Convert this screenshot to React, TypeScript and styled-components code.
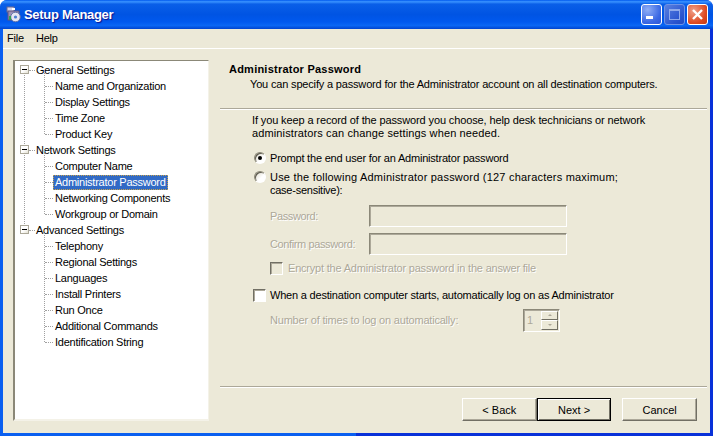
import { createGlobalStyle, styled } from 'styled-components';

const GlobalStyle = createGlobalStyle`
  html, body { margin: 0; padding: 0; background: #fff; }
  * { box-sizing: border-box; }
  body { font-family: "Liberation Sans", Arial, sans-serif; font-size: 11px; color: #000; }
`;

const Window = styled.div`
  width: 713px;
  height: 436px;
  display: flex;
  flex-direction: column;
  overflow: hidden;
  background: linear-gradient(90deg, #0a5ff0 0, #0a5ff0 50%, #0831d9 50%);
  border-radius: 7px 7px 0 0;
`;

const TitleBar = styled.div`
  height: 29px;
  flex: none;
  display: flex;
  align-items: center;
  padding: 0 5px 0 6px;
  background: linear-gradient(180deg, #0058ee 0%, #3a93ff 6%, #0a5fe8 14%, #0054e3 50%, #0058ee 75%, #0a66f4 88%, #0043cf 100%);
`;

const TitleText = styled.div`
  margin-left: 2px;
  flex: 1;
  font-size: 13px;
  font-weight: 700;
  letter-spacing: -0.3px;
  color: #fff;
  text-shadow: 1px 1px 1px #0f1089;
`;

const CaptionButton = styled.div<{ $kind: 'min' | 'max' | 'close' }>`
  width: 21px;
  height: 21px;
  margin-left: 2px;
  display: grid;
  place-items: center;
  border: 1px solid ${({ $kind }) => ($kind === 'max' ? '#6f93e6' : '#fff')};
  border-radius: 3px;
  background: ${({ $kind }) =>
    $kind === 'close'
      ? 'radial-gradient(circle at 30% 30%, #f0a08a, #dd4a22 65%, #c23a12)'
      : $kind === 'max'
        ? 'linear-gradient(135deg, #5a80e0, #2a55cf 70%, #2049c2)'
        : 'radial-gradient(circle at 30% 25%, #90aef5, #3a68e4 65%, #2a55d8)'};
`;

const ClientArea = styled.div`
  flex: 1;
  min-height: 0;
  margin: 0 3px 3px;
  display: flex;
  flex-direction: column;
  background: #ece9d8;
`;

const MenuBar = styled.div`
  height: 20px;
  flex: none;
  display: flex;
  align-items: center;
  gap: 12px;
  padding: 0 4px 1px;
  border-bottom: 1px solid #fff;
`;

const MenuItem = styled.span`
  font-size: 11px;
  letter-spacing: -0.2px;
`;

const Body = styled.div`
  flex: 1;
  min-height: 0;
  display: flex;
  gap: 11px;
  padding: 11px 3px 12px 10px;
`;

const TreePanel = styled.div`
  width: 196px;
  flex: none;
  padding-top: 1px;
  background: #fff;
  border: 2px solid;
  border-color: #8b8878 #f4f2e8 #f4f2e8 #8b8878;
  border-top-width: 1px;
  border-right-width: 1px;
`;

const Group = styled.div<{ $last?: boolean }>`
  position: relative;

  &::before {
    content: ${({ $last }) => ($last ? 'none' : "''")};
    position: absolute;
    left: 9px;
    top: 8px;
    bottom: -8px;
    border-left: 1px dotted #a0a0a0;
  }
`;

const RootRow = styled.div`
  position: relative;
  height: 16px;
  line-height: 16px;
  padding-left: 21px;
  white-space: nowrap;
  letter-spacing: -0.22px;

  &::before {
    content: '';
    position: absolute;
    left: 14px;
    top: 8px;
    width: 6px;
    border-top: 1px dotted #a0a0a0;
  }
`;

const Expander = styled.span`
  position: absolute;
  z-index: 1;
  left: 5px;
  top: 3px;
  width: 9px;
  height: 9px;
  background: linear-gradient(135deg, #fff 50%, #e4e1d2);
  border: 1px solid #aca899;

  &::after {
    content: '';
    position: absolute;
    left: 1px;
    top: 3px;
    width: 5px;
    height: 1px;
    background: #000;
  }
`;

const Children = styled.div`
  position: relative;

  &::before {
    content: '';
    position: absolute;
    left: 29px;
    top: -8px;
    bottom: 8px;
    border-left: 1px dotted #a0a0a0;
  }
`;

const ChildRow = styled.div`
  position: relative;
  height: 16px;
  line-height: 15px;
  padding-left: 38px;
  white-space: nowrap;

  &::before {
    content: '';
    position: absolute;
    left: 30px;
    top: 8px;
    width: 8px;
    border-top: 1px dotted #a0a0a0;
  }
`;

const ChildLabel = styled.span<{ $selected?: boolean }>`
  display: inline-block;
  height: 15px;
  padding: 0 2px;
  margin-top: 1px;
  letter-spacing: -0.25px;
  color: ${({ $selected }) => ($selected ? '#fff' : '#000')};
  background: ${({ $selected }) => ($selected ? '#316ac5' : 'transparent')};
  outline: ${({ $selected }) => ($selected ? '1px dotted #c9a24a' : 'none')};
  outline-offset: -1px;
`;

const Main = styled.div`
  flex: 1;
  display: flex;
  flex-direction: column;
  min-width: 0;
`;

const Header = styled.div`
  height: 48px;
  flex: none;
  padding: 1px 0 0 9px;
`;

const HeaderTitle = styled.div`
  height: 15px;
  line-height: 16px;
  font-weight: 700;
  letter-spacing: 0.23px;
`;

const HeaderSub = styled.div`
  height: 16px;
  line-height: 16px;
  margin-left: 21px;
  letter-spacing: -0.17px;
  white-space: nowrap;
`;

const Divider = styled.div`
  height: 2px;
  flex: none;
  border-top: 1px solid #aca899;
  border-bottom: 1px solid #fff;
`;

const Content = styled.div`
  flex: 1;
  padding: 4px 0 0 32px;
  display: flex;
  flex-direction: column;
`;

const Paragraph = styled.div`
  line-height: 13px;
  margin-bottom: 12px;
`;

const TextLine = styled.div<{ $spacing: number }>`
  letter-spacing: ${({ $spacing }) => $spacing}px;
  white-space: nowrap;
`;

const OptionRow = styled.div<{ $top: number; $indent?: number; $gap?: number }>`
  display: flex;
  align-items: flex-start;
  gap: ${({ $gap }) => $gap ?? 4}px;
  margin-top: ${({ $top }) => $top}px;
  margin-left: ${({ $indent }) => $indent ?? 2}px;
`;

const OptionText = styled.div<{ $disabled?: boolean }>`
  line-height: 13px;
  letter-spacing: -0.2px;
  white-space: nowrap;
  color: ${({ $disabled }) => ($disabled ? '#aca899' : '#000')};
  text-shadow: ${({ $disabled }) => ($disabled ? '1px 1px 0 #fff' : 'none')};
`;

const Radio = styled.span<{ $checked?: boolean }>`
  width: 12px;
  height: 12px;
  flex: none;
  display: grid;
  place-items: center;
  border-radius: 50%;
  background: linear-gradient(135deg, #dcd8c8, #fff 60%);
  border: 1px solid;
  border-color: #8b8878 #fff #fff #8b8878;
  box-shadow: inset 1px 1px 0 #5c5a4e;

  &::after {
    content: '';
    display: ${({ $checked }) => ($checked ? 'block' : 'none')};
    width: 4px;
    height: 4px;
    border-radius: 50%;
    background: #000;
  }
`;

const Checkbox = styled.span<{ $disabled?: boolean }>`
  width: 13px;
  height: 13px;
  flex: none;
  background: ${({ $disabled }) => ($disabled ? '#ece9d8' : '#fff')};
  border: 1px solid;
  border-color: #716f64 #fff #fff #716f64;
  box-shadow: inset 1px 1px 0 #aca899;
`;

const FieldRow = styled.div<{ $top: number }>`
  display: flex;
  align-items: center;
  height: 22px;
  margin-top: ${({ $top }) => $top}px;
  margin-left: 18px;
`;

const FieldLabel = styled(OptionText)<{ $width?: number; $spacing?: number }>`
  width: ${({ $width }) => $width ?? 99}px;
  flex: none;
  letter-spacing: ${({ $spacing }) => $spacing ?? -0.38}px;
`;

const DisabledInput = styled.div`
  width: 198px;
  height: 22px;
  background: #ece9d8;
  border: 1px solid;
  border-color: #8b8878 #fff #fff #8b8878;
  box-shadow: inset 1px 1px 0 #aca899;
`;

const SpinBox = styled.div`
  width: 37px;
  height: 23px;
  margin-left: 2px;
  display: flex;
  justify-content: space-between;
  padding: 1px 1px 1px 3px;
  background: #ece9d8;
  border: 1px solid;
  border-color: #8b8878 #fff #fff #8b8878;
  box-shadow: inset 1px 1px 0 #aca899;
  font-size: 11px;
  line-height: 19px;
  color: #aca899;
`;

const SpinButtons = styled.div`
  width: 17px;
  display: flex;
  flex-direction: column;
`;

const SpinArrow = styled.span<{ $down?: boolean }>`
  flex: 1;
  display: grid;
  place-items: center;
  background: #ece9d8;
  border: 1px solid;
  border-color: #fff #716f64 #716f64 #fff;

  &::after {
    content: '';
    width: 0;
    height: 0;
    border-left: 2px solid transparent;
    border-right: 2px solid transparent;
    ${({ $down }) => ($down ? 'border-top: 2px solid #aca899;' : 'border-bottom: 2px solid #aca899;')}
  }
`;

const Footer = styled.div`
  height: 33px;
  flex: none;
  display: flex;
  align-items: flex-end;
  padding: 0 10px 0 242px;
`;

const PushButton = styled.div<{ $default?: boolean; $gap?: number }>`
  width: 75px;
  height: 23px;
  margin-left: ${({ $gap }) => $gap ?? 0}px;
  display: grid;
  place-items: center;
  font-size: 11px;
  background: #ece9d8;
  border: 1px solid;
  border-color: ${({ $default }) => ($default ? '#000' : '#fff #716f64 #716f64 #fff')};
  box-shadow: ${({ $default }) =>
    $default ? 'inset 1px 1px 0 #fff, inset -1px -1px 0 #716f64' : 'inset -1px -1px 0 #aca899'};
`;

function AppIcon() {
  return (
    <svg width="16" height="17" viewBox="0 0 16 17">
      <rect x="1" y="1" width="7" height="5" fill="#d8d4e8" stroke="#6a6a90" />
      <rect x="2" y="5" width="11" height="9" fill="#9c8fb4" stroke="#5c5480" />
      <circle cx="9.5" cy="11" r="4.8" fill="#e6e6f2" stroke="#6070a8" />
      <circle cx="9.5" cy="11" r="1.6" fill="#4c7fd0" />
      <rect x="3" y="10" width="2" height="4" fill="#38a050" />
      <rect x="6" y="2" width="3" height="2" fill="#fff" />
    </svg>
  );
}

function CloseGlyph() {
  return (
    <svg width="13" height="13" viewBox="0 0 13 13">
      <path d="M2 2 L11 11 M11 2 L2 11" stroke="#fff" strokeWidth="2.4" />
    </svg>
  );
}

function MaxGlyph() {
  return (
    <svg width="13" height="13" viewBox="0 0 13 13" fill="none">
      <rect x="1.5" y="1.5" width="10" height="10" stroke="#8fa9ea" />
      <rect x="1" y="1" width="11" height="2" fill="#8fa9ea" />
    </svg>
  );
}

function MinGlyph() {
  return (
    <svg width="13" height="13" viewBox="0 0 13 13">
      <rect x="1" y="8" width="7" height="3" fill="#fff" />
    </svg>
  );
}

const tree = [
  {
    name: 'General Settings',
    items: ['Name and Organization', 'Display Settings', 'Time Zone', 'Product Key'],
  },
  {
    name: 'Network Settings',
    items: ['Computer Name', 'Administrator Password', 'Networking Components', 'Workgroup or Domain'],
  },
  {
    name: 'Advanced Settings',
    items: [
      'Telephony',
      'Regional Settings',
      'Languages',
      'Install Printers',
      'Run Once',
      'Additional Commands',
      'Identification String',
    ],
  },
];

export default function App() {
  return (
    <Window>
      <GlobalStyle />
      <TitleBar>
        <AppIcon />
        <TitleText>Setup Manager</TitleText>
        <CaptionButton $kind="min">
          <MinGlyph />
        </CaptionButton>
        <CaptionButton $kind="max">
          <MaxGlyph />
        </CaptionButton>
        <CaptionButton $kind="close">
          <CloseGlyph />
        </CaptionButton>
      </TitleBar>
      <ClientArea>
        <MenuBar>
          <MenuItem>File</MenuItem>
          <MenuItem>Help</MenuItem>
        </MenuBar>
        <Body>
          <TreePanel>
            {tree.map((group, i) => (
              <Group key={group.name} $last={i === tree.length - 1}>
                <RootRow>
                  <Expander />
                  {group.name}
                </RootRow>
                <Children>
                  {group.items.map((item) => (
                    <ChildRow key={item}>
                      <ChildLabel $selected={item === 'Administrator Password'}>{item}</ChildLabel>
                    </ChildRow>
                  ))}
                </Children>
              </Group>
            ))}
          </TreePanel>
          <Main>
            <Header>
              <HeaderTitle>Administrator Password</HeaderTitle>
              <HeaderSub>
                You can specify a password for the Administrator account on all destination computers.
              </HeaderSub>
            </Header>
            <Divider />
            <Content>
              <Paragraph>
                <TextLine $spacing={-0.12}>
                  If you keep a record of the password you choose, help desk technicians or network
                </TextLine>
                <TextLine $spacing={0.13}>administrators can change settings when needed.</TextLine>
              </Paragraph>
              <OptionRow $top={0}>
                <Radio $checked />
                <OptionText>Prompt the end user for an Administrator password</OptionText>
              </OptionRow>
              <OptionRow $top={6}>
                <Radio />
                <OptionText>
                  <TextLine $spacing={0.21}>
                    Use the following Administrator password (127 characters maximum;
                  </TextLine>
                  <TextLine $spacing={-0.25}>case-sensitive):</TextLine>
                </OptionText>
              </OptionRow>
              <FieldRow $top={8}>
                <FieldLabel $disabled>Password:</FieldLabel>
                <DisabledInput />
              </FieldRow>
              <FieldRow $top={6}>
                <FieldLabel $disabled>Confirm password:</FieldLabel>
                <DisabledInput />
              </FieldRow>
              <OptionRow $top={7} $indent={18} $gap={5}>
                <Checkbox $disabled />
                <OptionText $disabled>Encrypt the Administrator password in the answer file</OptionText>
              </OptionRow>
              <OptionRow $top={14} $indent={1}>
                <Checkbox />
                <OptionText>When a destination computer starts, automatically log on as Administrator</OptionText>
              </OptionRow>
              <FieldRow $top={7}>
                <FieldLabel $disabled $width={251} $spacing={-0.2}>
                  Number of times to log on automatically:
                </FieldLabel>
                <SpinBox>
                  1
                  <SpinButtons>
                    <SpinArrow />
                    <SpinArrow $down />
                  </SpinButtons>
                </SpinBox>
              </FieldRow>
            </Content>
            <Divider />
            <Footer>
              <PushButton>&lt; Back</PushButton>
              <PushButton $default>Next &gt;</PushButton>
              <PushButton $gap={11}>Cancel</PushButton>
            </Footer>
          </Main>
        </Body>
      </ClientArea>
    </Window>
  );
}
